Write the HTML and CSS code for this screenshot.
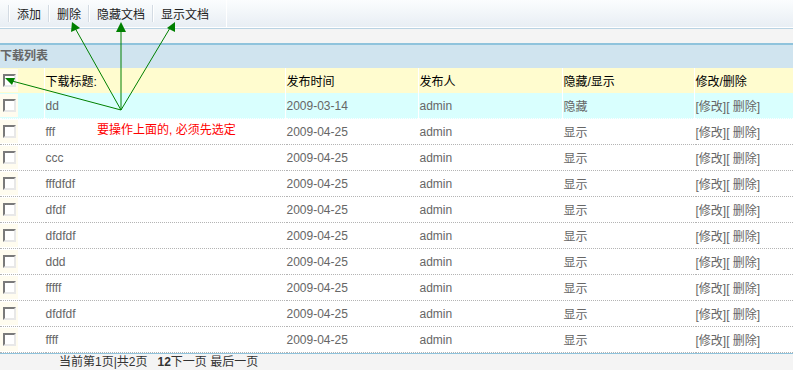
FILE: index.html
```html
<!DOCTYPE html>
<html lang="zh-CN">
<head>
    <meta charset="UTF-8">
    <title>下载列表</title>
    <link rel="stylesheet" href="styles.css">
</head>
<body>
    <div class="toolbar">
        <span class="sep"></span>
        <a class="tool">添加</a>
        <span class="sep"></span>
        <a class="tool">删除</a>
        <span class="sep"></span>
        <a class="tool">隐藏文档</a>
        <span class="sep"></span>
        <a class="tool">显示文档</a>
        <span class="sep end"></span>
    </div>
    <div class="gap"></div>
    <div class="title-bar">下载列表</div>

    <table class="list">
        <colgroup>
            <col class="c-check">
            <col class="c-title">
            <col class="c-time">
            <col class="c-user">
            <col class="c-show">
            <col class="c-edit">
        </colgroup>
        <thead>
            <tr>
                <th><span class="box-cell"><input type="checkbox" class="chk" checked></span></th>
                <th>下载标题:</th>
                <th>发布时间</th>
                <th>发布人</th>
                <th>隐藏/显示</th>
                <th>修改/删除</th>
            </tr>
        </thead>
        <tbody>
            <tr class="hl"><td><span class="box-cell"><input type="checkbox" class="chk"></span></td><td>dd</td><td>2009-03-14</td><td>admin</td><td>隐藏</td><td>[修改][ 删除]</td></tr>
            <tr><td><span class="box-cell"><input type="checkbox" class="chk"></span></td><td>fff</td><td>2009-04-25</td><td>admin</td><td>显示</td><td>[修改][ 删除]</td></tr>
            <tr><td><span class="box-cell"><input type="checkbox" class="chk"></span></td><td>ccc</td><td>2009-04-25</td><td>admin</td><td>显示</td><td>[修改][ 删除]</td></tr>
            <tr><td><span class="box-cell"><input type="checkbox" class="chk"></span></td><td>fffdfdf</td><td>2009-04-25</td><td>admin</td><td>显示</td><td>[修改][ 删除]</td></tr>
            <tr><td><span class="box-cell"><input type="checkbox" class="chk"></span></td><td>dfdf</td><td>2009-04-25</td><td>admin</td><td>显示</td><td>[修改][ 删除]</td></tr>
            <tr><td><span class="box-cell"><input type="checkbox" class="chk"></span></td><td>dfdfdf</td><td>2009-04-25</td><td>admin</td><td>显示</td><td>[修改][ 删除]</td></tr>
            <tr><td><span class="box-cell"><input type="checkbox" class="chk"></span></td><td>ddd</td><td>2009-04-25</td><td>admin</td><td>显示</td><td>[修改][ 删除]</td></tr>
            <tr><td><span class="box-cell"><input type="checkbox" class="chk"></span></td><td>fffff</td><td>2009-04-25</td><td>admin</td><td>显示</td><td>[修改][ 删除]</td></tr>
            <tr><td><span class="box-cell"><input type="checkbox" class="chk"></span></td><td>dfdfdf</td><td>2009-04-25</td><td>admin</td><td>显示</td><td>[修改][ 删除]</td></tr>
            <tr><td><span class="box-cell"><input type="checkbox" class="chk"></span></td><td>ffff</td><td>2009-04-25</td><td>admin</td><td>显示</td><td>[修改][ 删除]</td></tr>
        </tbody>
    </table>

    <div class="pager">当前第1页|共2页<span class="pages"><b>12</b>下一页 最后一页</span></div>

    <!-- 说明箭头 -->
    <svg class="arrows" width="793" height="370" viewBox="0 0 793 370">
        <g stroke="#008000" stroke-width="1" fill="none">
            <line x1="121" y1="110" x2="75" y2="28"/>
            <line x1="121" y1="110" x2="121" y2="30"/>
            <line x1="121" y1="110" x2="170" y2="28"/>
            <line x1="121" y1="110" x2="12" y2="81"/>
        </g>
        <g fill="#008000">
            <polygon points="72,22 80,28 71,32"/>
            <polygon points="121,22 126,32 116,32"/>
            <polygon points="175,22 175,32 167,28"/>
            <polygon points="5,78 15,78 12,85"/>
        </g>
    </svg>
    <div class="note">要操作上面的, 必须先选定</div>
</body>
</html>
```

FILE: styles.css
```css
body {
    margin: 0;
    padding: 0;
    font-family: "Liberation Sans", "Noto Sans CJK SC", sans-serif;
    font-size: 12px;
    color: #333;
    background: #fff;
    position: relative;
    width: 793px;
    height: 370px;
    overflow: hidden;
}
.toolbar {
    display: flex;
    align-items: center;
    height: 27px;
    background: linear-gradient(#fbfdfe, #e8eef4);
    border-bottom: 1px solid #fff;
    box-shadow: 0 1px 0 #b9d3e3;
    padding-left: 8px;
}
.sep {
    width: 1px;
    height: 17px;
    background: #d3dbe3;
    border-right: 1px solid #fff;
}
.sep.end {
    background: #fff;
    border-right: none;
    height: 27px;
    margin-left: 10px;
}
.tool {
    color: #222;
    padding: 0 7px 0 7px;
    cursor: pointer;
}
.gap {
    height: 14px;
    margin-top: 1px;
    background: #f4f4f4;
    border-bottom: 2px solid #8fc3dc;
}
.title-bar {
    height: 23px;
    line-height: 23px;
    background: #d0e4ef;
    color: #666;
    font-weight: bold;
}
.list {
    width: 793px;
    border-collapse: collapse;
    table-layout: fixed;
}
.c-check { width: 44px; }
.c-title { width: 241px; }
.c-time { width: 133px; }
.c-user { width: 144px; }
.c-show { width: 132px; }
.c-edit { width: 99px; }
.list th {
    height: 25px;
    padding: 0 0 0 1px;
    background: #fffccf;
    color: #000;
    font-weight: normal;
    text-align: left;
    border-left: 1px solid #fff;
}
.list td {
    height: 25px;
    padding: 0 0 0 1px;
    color: #666;
    border-bottom: 1px dotted #b4b4b4;
    border-left: 1px solid #fff;
}
.list th:first-child,
.list td:first-child {
    padding: 0;
    border-left: none;
}
.list tr.hl td {
    background: #d9fffe;
    border-bottom-color: #fff;
}
.list tbody tr:last-child td {
    border-bottom: 1px dotted #b4b4b4;
}
.box-cell {
    display: flex;
    align-items: center;
    justify-content: center;
    width: 18px;
    height: 23px;
    background: #fffcef;
}
.chk {
    appearance: none;
    -webkit-appearance: none;
    margin: 0;
    width: 13px;
    height: 13px;
    box-sizing: border-box;
    background: #fff;
    border: 1px solid #fff;
    border-top-color: #808080;
    border-left-color: #808080;
    box-shadow: inset 1px 1px 0 #404040, 0 0 0 0 #fff;
    outline: 1px solid #ece9d8;
    outline-offset: -1px;
}
.chk {
    outline: none;
    border: 2px solid;
    border-color: #7a7a7a #e8e8e8 #e8e8e8 #7a7a7a;
    box-shadow: none;
}
.pager {
    border-top: 1px solid #8fc3dc;
    background: #f4f4f4;
    height: 17px;
    line-height: 16px;
    padding-left: 59px;
    color: #333;
}
.pages {
    margin-left: 10px;
}
.pages b {
    font-weight: bold;
}
.arrows {
    position: absolute;
    left: 0;
    top: 0;
    pointer-events: none;
}
.note {
    position: absolute;
    left: 97px;
    top: 122px;
    color: #f00;
    line-height: 16px;
}
```
